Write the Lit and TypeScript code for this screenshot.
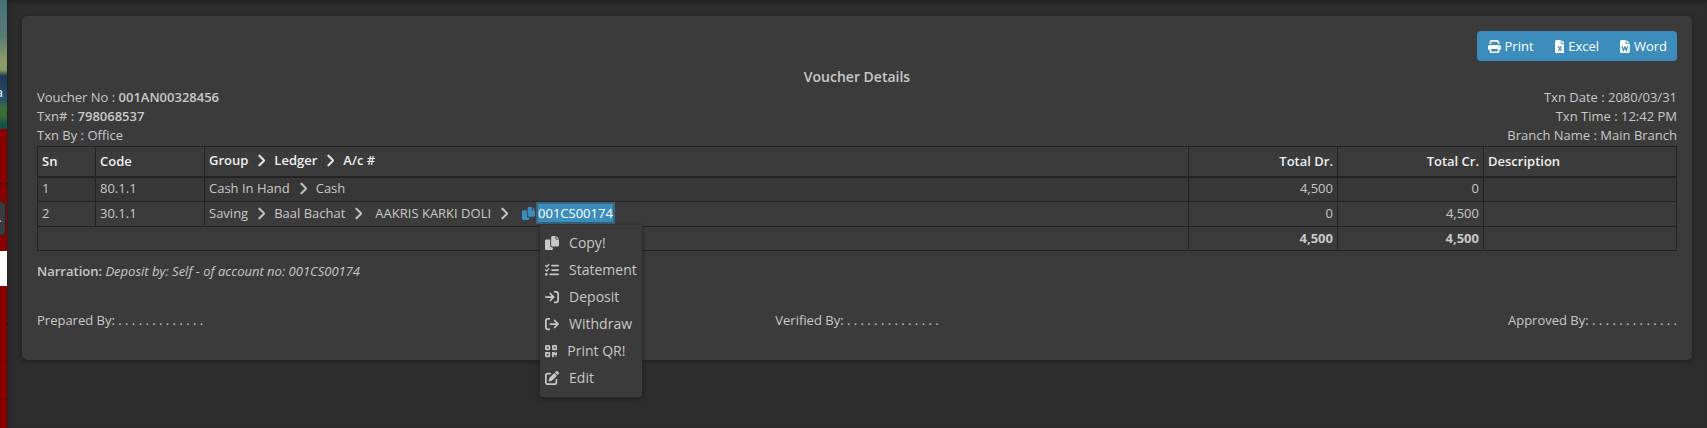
import { LitElement, html, css, svg } from "lit";
import { customElement } from "lit/decorators.js";

const PAGE_SHEET = "M64 0C28.7 0 0 28.7 0 64V448c0 35.3 28.7 64 64 64H320c35.3 0 64-28.7 64-64V160H256c-17.7 0-32-14.3-32-32V0H64zM256 0V128H384L256 0z";

const ICONS: Record<string, [number, string]> = {
  chevron: [320, "M310.6 233.4c12.5 12.5 12.5 32.8 0 45.3l-192 192c-12.5 12.5-32.8 12.5-45.3 0s-12.5-32.8 0-45.3L242.7 256 73.4 86.6c-12.5-12.5-12.5-32.8 0-45.3s32.8-12.5 45.3 0l192 192z"],
  print: [512, "M128 0C92.7 0 64 28.7 64 64v96h64V64H354.7L384 93.3V160h64V93.3c0-17-6.7-33.3-18.7-45.3L400 18.7C388 6.7 371.7 0 354.7 0H128zM384 352v32 64H128V384 368 352H384zm64 32h32c17.7 0 32-14.3 32-32V256c0-35.3-28.7-64-64-64H64c-35.3 0-64 28.7-64 64v96c0 17.7 14.3 32 32 32H64v64c0 35.3 28.7 64 64 64H384c35.3 0 64-28.7 64-64V384zM432 248a24 24 0 1 1 0 48 24 24 0 1 1 0-48z"],
  excel: [384, PAGE_SHEET + "M155.7 250.2L192 302.1l36.3-51.9c7.6-10.9 22.6-13.5 33.4-5.9s13.5 22.6 5.9 33.4L221.3 344l46.4 66.2c7.6 10.9 5 25.8-5.9 33.4s-25.8 5-33.4-5.9L192 385.8l-36.3 51.9c-7.6 10.9-22.6 13.5-33.4 5.9s-13.5-22.6-5.9-33.4L162.7 344l-46.4-66.2c-7.6-10.9-5-25.8 5.9-33.4s25.8-5 33.4 5.9z"],
  word: [384, PAGE_SHEET + "M111 257.1l26.8 89.2 31.6-90.3c3.4-9.6 12.5-16.1 22.7-16.1s19.3 6.4 22.7 16.1l31.6 90.3L273 257.1c3.8-12.7 17.2-19.9 29.9-16.1s19.9 17.2 16.1 29.9l-48 160c-3 10-12 16.9-22.4 17.1s-19.8-6.2-23.2-16.1L192 336.6l-33.3 95.3c-3.4 9.8-12.8 16.3-23.2 16.1s-19.5-7.1-22.4-17.1l-48-160c-3.8-12.7 3.4-26.1 16.1-29.9s26.1 3.4 29.9 16.1z"],
  copy: [512, "M384 96L384 0h-112c-26.51 0-48 21.49-48 48v288c0 26.51 21.49 48 48 48H464c26.51 0 48-21.49 48-48V128h-95.1C398.4 128 384 113.6 384 96zM416 0v96h96L416 0zM192 352V128h-144c-26.51 0-48 21.49-48 48v288c0 26.51 21.49 48 48 48h192c26.51 0 48-21.49 48-48L288 416h-32C220.7 416 192 387.3 192 352z"],
  list: [512, "M152.1 38.2c9.9 8.9 10.7 24 1.8 33.9l-72 80c-4.4 4.9-10.6 7.8-17.2 7.9s-12.9-2.4-17.6-7L7 113C-2.3 103.6-2.3 88.4 7 79s24.6-9.4 33.9 0l22.1 22.1 55.1-61.2c8.9-9.9 24-10.7 33.9-1.8zm0 160c9.9 8.9 10.7 24 1.8 33.9l-72 80c-4.4 4.9-10.6 7.8-17.2 7.9s-12.9-2.4-17.6-7L7 273c-9.4-9.4-9.4-24.6 0-33.9s24.6-9.4 33.9 0l22.1 22.1 55.1-61.2c8.9-9.9 24-10.7 33.9-1.8zM224 96c0-17.7 14.3-32 32-32H480c17.7 0 32 14.3 32 32s-14.3 32-32 32H256c-17.7 0-32-14.3-32-32zm0 160c0-17.7 14.3-32 32-32H480c17.7 0 32 14.3 32 32s-14.3 32-32 32H256c-17.7 0-32-14.3-32-32zM160 416c0-17.7 14.3-32 32-32H480c17.7 0 32 14.3 32 32s-14.3 32-32 32H192c-17.7 0-32-14.3-32-32zM48 368a48 48 0 1 1 0 96 48 48 0 1 1 0-96z"],
  deposit: [512, "M352 96l64 0c17.7 0 32 14.3 32 32l0 256c0 17.7-14.3 32-32 32l-64 0c-17.7 0-32 14.3-32 32s14.3 32 32 32l64 0c53 0 96-43 96-96l0-256c0-53-43-96-96-96l-64 0c-17.7 0-32 14.3-32 32s14.3 32 32 32zm-9.4 182.6c12.5-12.5 12.5-32.8 0-45.3l-128-128c-12.5-12.5-32.8-12.5-45.3 0s-12.5 32.8 0 45.3L242.7 224 32 224c-17.7 0-32 14.3-32 32s14.3 32 32 32l210.7 0-73.4 73.4c-12.5 12.5-12.5 32.8 0 45.3s32.8 12.5 45.3 0l128-128z"],
  withdraw: [512, "M502.6 278.6c12.5-12.5 12.5-32.8 0-45.3l-128-128c-12.5-12.5-32.8-12.5-45.3 0s-12.5 32.8 0 45.3L402.7 224 192 224c-17.7 0-32 14.3-32 32s14.3 32 32 32l210.7 0-73.4 73.4c-12.5 12.5-12.5 32.8 0 45.3s32.8 12.5 45.3 0l128-128zM160 96c17.7 0 32-14.3 32-32s-14.3-32-32-32L96 32C43 32 0 75 0 128L0 384c0 53 43 96 96 96l64 0c17.7 0 32-14.3 32-32s-14.3-32-32-32l-64 0c-17.7 0-32-14.3-32-32l0-256c0-17.7 14.3-32 32-32l64 0z"],
  qr: [448, "M0 80C0 53.5 21.5 32 48 32h96c26.5 0 48 21.5 48 48v96c0 26.5-21.5 48-48 48H48c-26.5 0-48-21.5-48-48V80zM64 96v64h64V96H64zM0 336c0-26.5 21.5-48 48-48h96c26.5 0 48 21.5 48 48v96c0 26.5-21.5 48-48 48H48c-26.5 0-48-21.5-48-48V336zm64 16v64h64V352H64zM304 32h96c26.5 0 48 21.5 48 48v96c0 26.5-21.5 48-48 48H304c-26.5 0-48-21.5-48-48V80c0-26.5 21.5-48 48-48zm80 64H320v64h64V96zM256 304c0-8.8 7.2-16 16-16h64c8.8 0 16 7.2 16 16s7.2 16 16 16h32c8.8 0 16-7.2 16-16s7.2-16 16-16s16 7.2 16 16v96c0 8.8-7.2 16-16 16H368c-8.8 0-16-7.2-16-16s-7.2-16-16-16s-16 7.2-16 16v64c0 8.8-7.2 16-16 16H272c-8.8 0-16-7.2-16-16V304zM368 480a16 16 0 1 1 0-32 16 16 0 1 1 0 32zm64 0a16 16 0 1 1 0-32 16 16 0 1 1 0 32z"],
  edit: [512, "M471.6 21.7c-21.9-21.9-57.3-21.9-79.2 0L362.3 51.7l97.9 97.9 30.1-30.1c21.9-21.9 21.9-57.3 0-79.2L471.6 21.7zm-299.2 220c-6.1 6.1-10.8 13.6-13.5 21.9l-29.6 88.8c-2.9 8.6-.6 18.1 5.8 24.6s15.9 8.7 24.6 5.8l88.8-29.6c8.2-2.7 15.7-7.4 21.9-13.5L437.7 172.3 339.7 74.3 172.4 241.7zM96 64C43 64 0 107 0 160V416c0 53 43 96 96 96H352c53 0 96-43 96-96V320c0-17.7-14.3-32-32-32s-32 14.3-32 32v96c0 17.7-14.3 32-32 32H96c-17.7 0-32-14.3-32-32V160c0-17.7 14.3-32 32-32h96c17.7 0 32-14.3 32-32s-14.3-32-32-32H96z"],
};

// The glyph takes its height from the .icon rule; the width follows the viewBox.
const icon = (name: string) => {
  const [w, d] = ICONS[name];
  return html`<svg class="icon" viewBox="0 0 ${w} 512" fill="currentColor" fill-rule=${name === "excel" || name === "word" ? "evenodd" : "nonzero"} aria-hidden="true">${svg`<path d=${d}></path>`}</svg>`;
};

const MENU = [
  ["copy", "Copy!"],
  ["list", "Statement"],
  ["deposit", "Deposit"],
  ["withdraw", "Withdraw"],
  ["qr", "Print QR!"],
  ["edit", "Edit"],
];

@customElement("app-root")
export class AppRoot extends LitElement {
  static styles = css`
    :host {
      display: flex;
      min-height: 100vh;
      overflow: hidden;
      background: #2d2d2d;
      color: #c8c8c8;
      font: 13px/20px "Open Sans", "Noto Sans", sans-serif;
    }
    * { box-sizing: border-box; }
    .icon { display: block; height: 13px; flex: none; }

    .sidebar {
      width: 7px;
      flex: none;
      display: flex;
      flex-direction: column;
      background: #8b0000;
      overflow: hidden;
      z-index: 1;
    }
    .banner {
      height: 129px;
      padding-top: 82px;
      background: linear-gradient(#46717a 0, #587a74 36px, #8c9e67 62px, #879a65 70px, #1e3a55 76px, #274a6c 94px, #2b5568 102px, #3d7037 108px, #356b38 116px, #17534b 124px, #14504a 129px);
      color: #fff;
      direction: rtl;
      white-space: nowrap;
    }
    .banner span { margin-right: 4px; }
    .brand { height: 55px; border-bottom: 1px solid #5e0000; box-shadow: 0 1px 2px #5e0000; }
    .search {
      height: 35px;
      margin: 17px 1px 15px 0;
      padding-top: 5px;
      border: 1px solid #252525;
      border-left: 0;
      border-radius: 0 5px 5px 0;
      background: #3b3b3b;
      direction: rtl;
    }
    .search span { margin-right: 3px; }
    .active { height: 35px; background: #fff; }
    .entry { height: 38px; border-bottom: 1px solid #650000; }

    .main {
      flex: 1;
      min-width: 0;
      padding: 16px 15px;
      box-shadow: inset 0 5px 5px -4px #1c1c1c, inset 4px 0 5px -4px #1c1c1c;
    }
    .card {
      padding: 15px 15px 30px;
      border-radius: 5px;
      background: #3b3b3b;
      box-shadow: 0 1px 4px #1c1c1c;
    }
    .toolbar { display: flex; justify-content: flex-end; }
    .group { display: flex; border-radius: 4px; overflow: hidden; }
    .tool {
      display: flex;
      align-items: center;
      gap: 4px;
      height: 30px;
      padding: 0 10px 0 11px;
      border: 0;
      background: #3c8dbc;
      color: #fff;
      font: inherit;
    }
    .title { margin: 6px 0 0; font-size: 14px; line-height: 19px; font-weight: 600; text-align: center; }
    .info { display: flex; justify-content: space-between; padding: 2px 0 1px; line-height: 19px; }
    .right { text-align: right; }
    b { font-weight: 600; }

    table { width: 100%; table-layout: fixed; border-collapse: collapse; border: 1px solid #242424; }
    th, td { height: 25px; padding: 0 4px 2px; border: 1px solid #242424; text-align: left; white-space: nowrap; }
    th { height: 30px; padding-bottom: 0; border-bottom-width: 2px; color: #eee; font-weight: 600; }
    .crumbs { padding-bottom: 2px; }
    tbody tr:nth-child(odd) { background: #373737; }
    tfoot td { height: 24px; font-weight: 700; }
    .num { text-align: right; }
    .c-sn { width: 58px; }
    .c-code { width: 109px; }
    .c-dr { width: 149px; }
    .c-cr { width: 146px; }
    .c-desc { width: 193px; }

    .path { display: flex; align-items: center; }
    .path > .icon { width: 8px; margin: 0 9px; stroke: currentColor; stroke-width: 24px; }
    .holder { margin-left: 4px; }
    .account { display: flex; align-items: center; gap: 1px; margin-left: 5px; position: relative; }
    .clip { padding: 0; border: 0; background: none; color: #3c8dbc; }
    .clip .icon { width: 13px; }
    .number {
      border: 2px solid #3b6680;
      background: #3c8dbc;
      color: #fff;
      line-height: 18px;
      text-decoration: none;
    }
    .menu {
      position: absolute;
      top: 100%;
      left: 18px;
      width: 102px;
      margin: 1px 0 0;
      padding: 4px 0 6px;
      list-style: none;
      border-radius: 2px;
      background: #3b3b3b;
      box-shadow: 0 1px 4px #1c1c1c;
      z-index: 2;
    }
    .item {
      display: flex;
      align-items: center;
      gap: 10px;
      width: 100%;
      height: 27px;
      padding: 0 5px;
      border: 0;
      background: none;
      color: inherit;
      font: inherit;
      font-size: 14px;
      text-align: left;
    }
    .menu .icon { width: auto; height: 14px; }

    .narration { margin: 10px 0 0; }
    .signs { display: grid; grid-template-columns: 1fr 1fr 1fr; margin-top: 29px; }
    .mid { text-align: center; }
  `;

  render() {
    return html`
      <nav class="sidebar">
        <div class="banner"><span>a</span></div>
        <div class="brand"></div>
        <div class="search"><span>.</span></div>
        <div class="active"></div>
        <div class="entry"></div>
        <div class="entry"></div>
        <div class="entry"></div>
      </nav>
      <main class="main">
        <section class="card">
          <div class="toolbar">
            <div class="group">
              <button class="tool">${icon("print")}Print</button>
              <button class="tool">${icon("excel")}Excel</button>
              <button class="tool">${icon("word")}Word</button>
            </div>
          </div>
          <h1 class="title">Voucher Details</h1>
          <div class="info">
            <div>
              <div>Voucher No : <b>001AN00328456</b></div>
              <div>Txn# : <b>798068537</b></div>
              <div>Txn By : Office</div>
            </div>
            <div class="right">
              <div>Txn Date : 2080/03/31</div>
              <div>Txn Time : 12:42 PM</div>
              <div>Branch Name : Main Branch</div>
            </div>
          </div>
          <table>
            <colgroup>
              <col class="c-sn" /><col class="c-code" /><col /><col class="c-dr" /><col class="c-cr" /><col class="c-desc" />
            </colgroup>
            <thead>
              <tr>
                <th>Sn</th>
                <th>Code</th>
                <th class="crumbs"><div class="path">Group ${icon("chevron")} Ledger ${icon("chevron")} A/c #</div></th>
                <th class="num">Total Dr.</th>
                <th class="num">Total Cr.</th>
                <th>Description</th>
              </tr>
            </thead>
            <tbody>
              <tr>
                <td>1</td>
                <td>80.1.1</td>
                <td><div class="path">Cash In Hand ${icon("chevron")} Cash</div></td>
                <td class="num">4,500</td>
                <td class="num">0</td>
                <td></td>
              </tr>
              <tr>
                <td>2</td>
                <td>30.1.1</td>
                <td>
                  <div class="path">
                    Saving ${icon("chevron")} Baal Bachat ${icon("chevron")}
                    <span class="holder">AAKRIS KARKI DOLI</span> ${icon("chevron")}
                    <div class="account">
                      <button class="clip" aria-label="Copy">${icon("copy")}</button>
                      <a class="number" href="#">001CS00174</a>
                      <ul class="menu">
                        ${MENU.map(([name, label]) => html`<li><button class="item">${icon(name)}${label}</button></li>`)}
                      </ul>
                    </div>
                  </div>
                </td>
                <td class="num">0</td>
                <td class="num">4,500</td>
                <td></td>
              </tr>
            </tbody>
            <tfoot>
              <tr>
                <td colspan="3"></td>
                <td class="num">4,500</td>
                <td class="num">4,500</td>
                <td></td>
              </tr>
            </tfoot>
          </table>
          <p class="narration"><b>Narration:</b> <i>Deposit by: Self - of account no: 001CS00174</i></p>
          <div class="signs">
            <div>Prepared By: . . . . . . . . . . . . .</div>
            <div class="mid">Verified By: . . . . . . . . . . . . . .</div>
            <div class="right">Approved By: . . . . . . . . . . . . .</div>
          </div>
        </section>
      </main>
    `;
  }
}
